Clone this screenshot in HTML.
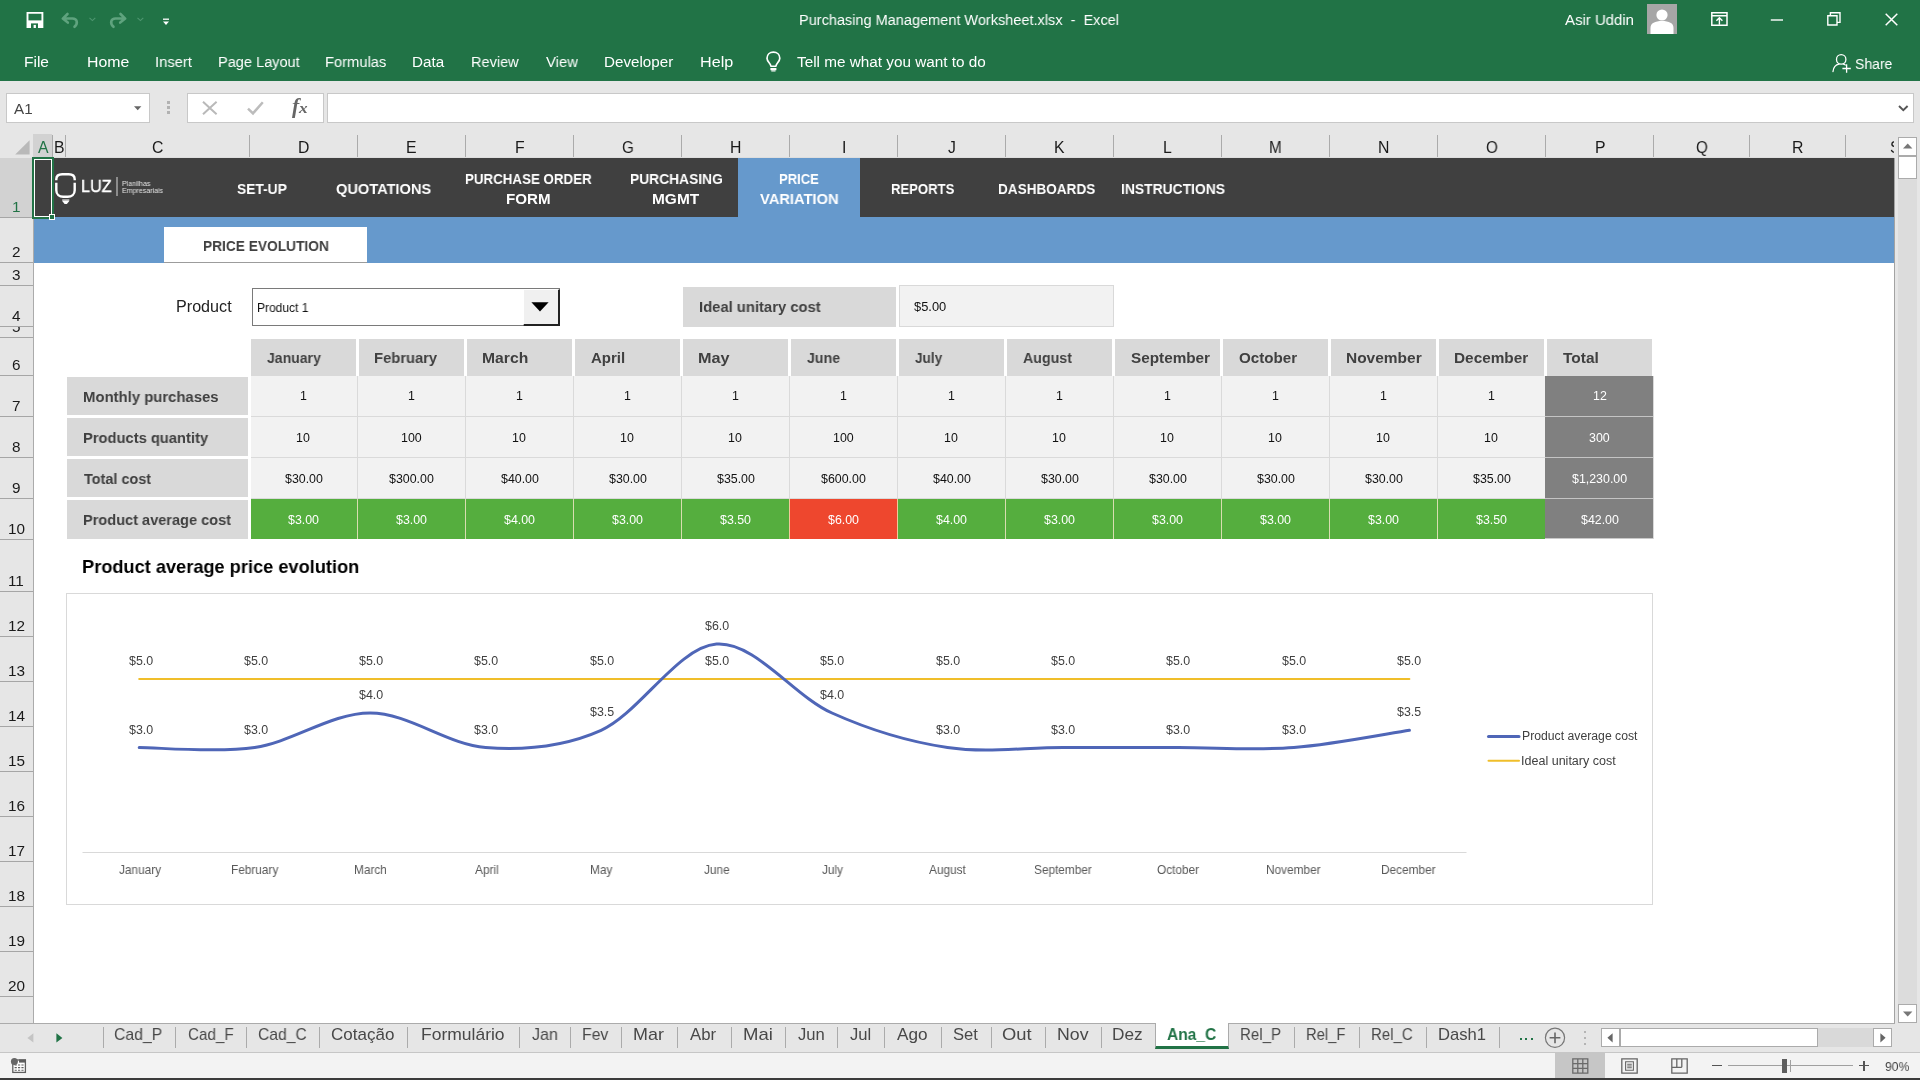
<!DOCTYPE html>
<html lang="en"><head><meta charset="utf-8"><title>Purchasing Management Worksheet.xlsx - Excel</title>
<style>
html,body{margin:0;padding:0;}
body{width:1920px;height:1080px;position:relative;overflow:hidden;background:#fff;font-family:"Liberation Sans",sans-serif;}
.b{position:absolute;box-sizing:border-box;}
.t{position:absolute;white-space:pre;line-height:1;transform-origin:0 0;will-change:transform;}
svg{position:absolute;overflow:visible;}
</style></head>
<body>
<!-- title bar -->
<div class="b" style="left:0px;top:0px;width:1920px;height:81px;background:#217346;"></div>
<span class="t" style="left:799.31px;top:12.13px;font-size:15.2px;color:#fff;transform:scaleX(0.9556);">Purchasing Management Worksheet.xlsx  -  Excel</span>
<span class="t" style="left:1565.47px;top:12.13px;font-size:15.2px;color:#fff;transform:scaleX(0.9849);">Asir Uddin</span>
<span class="t" style="left:23.73px;top:53.83px;font-size:15.2px;color:#fff;transform:scaleX(1.0194);">File</span>
<span class="t" style="left:87.20px;top:53.83px;font-size:15.2px;color:#fff;transform:scaleX(1.0429);">Home</span>
<span class="t" style="left:154.89px;top:53.83px;font-size:15.2px;color:#fff;transform:scaleX(0.9720);">Insert</span>
<span class="t" style="left:217.81px;top:53.83px;font-size:15.2px;color:#fff;transform:scaleX(0.9578);">Page Layout</span>
<span class="t" style="left:325.29px;top:53.83px;font-size:15.2px;color:#fff;transform:scaleX(0.9675);">Formulas</span>
<span class="t" style="left:412.25px;top:53.83px;font-size:15.2px;color:#fff;">Data</span>
<span class="t" style="left:471.11px;top:53.83px;font-size:15.2px;color:#fff;transform:scaleX(0.9557);">Review</span>
<span class="t" style="left:545.73px;top:53.83px;font-size:15.2px;color:#fff;transform:scaleX(0.9777);">View</span>
<span class="t" style="left:604.35px;top:53.83px;font-size:15.2px;color:#fff;">Developer</span>
<span class="t" style="left:700.18px;top:53.83px;font-size:15.2px;color:#fff;transform:scaleX(1.0625);">Help</span>
<span class="t" style="left:797.16px;top:53.83px;font-size:15.2px;color:#fff;transform:scaleX(1.0078);">Tell me what you want to do</span>
<span class="t" style="left:1854.76px;top:55.83px;font-size:15.2px;color:#fff;transform:scaleX(0.9217);">Share</span>
<svg style="left:26px;top:11px" width="18" height="18" viewBox="26 11 18 18"><path d="M27.5 12.9h14.9v14.2H27.5z" fill="none" stroke="#fff" stroke-width="1.9"/><rect x="28" y="20.4" width="14" height="7" fill="#fff"/><rect x="31" y="23.4" width="7" height="4.6" fill="#217346"/><rect x="33.6" y="24.9" width="2.3" height="3.1" fill="#fff"/></svg>
<svg style="left:61px;top:13px" width="19" height="15" viewBox="0 0 19 15"><path d="M6.5 1 L1.8 5.6 L6.8 9.6 M2.2 5.5 H11.5 C16 5.5 17.5 10 13.5 13.8" fill="none" stroke="#5fa37e" stroke-width="2.6" stroke-linecap="round" stroke-linejoin="round"/></svg>
<svg style="left:89px;top:17px" width="7" height="5" viewBox="0 0 7 5"><path d="M0.5 0.8 L3.4 3.6 L6.3 0.8" fill="none" stroke="#4e9670" stroke-width="1.1"/></svg>
<svg style="left:108px;top:13px" width="19" height="15" viewBox="0 0 19 15"><path d="M12.5 1 L17.2 5.6 L12.2 9.6 M16.8 5.5 H7.5 C3 5.5 1.5 10 5.5 13.8" fill="none" stroke="#5fa37e" stroke-width="2.6" stroke-linecap="round" stroke-linejoin="round"/></svg>
<svg style="left:137px;top:17px" width="7" height="5" viewBox="0 0 7 5"><path d="M0.5 0.8 L3.4 3.6 L6.3 0.8" fill="none" stroke="#4e9670" stroke-width="1.1"/></svg>
<svg style="left:162px;top:18px" width="8" height="8" viewBox="0 0 8 8"><path d="M1 1.2h6" stroke="#fff" stroke-width="1.3"/><path d="M1 3.6h6L4 6.9z" fill="#fff"/></svg>
<svg style="left:765px;top:51px" width="17" height="22" viewBox="0 0 17 22"><path d="M5.7 14.6 C5.7 12.2 2 10.8 2 7.2 C2 3.6 4.8 1.2 8.4 1.2 C12 1.2 14.8 3.6 14.8 7.2 C14.8 10.8 11.1 12.2 11.1 14.6" fill="none" stroke="#fff" stroke-width="1.7" stroke-linecap="round"/><path d="M5.4 14.6h6v1.3h-6z M5.4 17h6v2.2h-6z M6.3 19.4h4.2v1.2h-4.2z" fill="#fff"/></svg>
<svg style="left:1647px;top:4px" width="30" height="30" viewBox="0 0 30 30"><rect width="30" height="30" fill="#a6a6a6"/><circle cx="15" cy="11" r="5.6" fill="#fff"/><path d="M3.5 30 V24 C3.5 19 8 17 15 17 C22 17 26.5 19 26.5 24 V30z" fill="#fff"/></svg>
<svg style="left:1711px;top:12px" width="18" height="14" viewBox="0 0 18 14"><path d="M0.8 0.8h15.2v12.4H0.8z M0.8 3.7h15.2" fill="none" stroke="#fff" stroke-width="1.5"/><path d="M8.4 12.8V5.8 M5.4 8.8L8.4 5.8l3 3" fill="none" stroke="#fff" stroke-width="1.4"/></svg>
<svg style="left:1770px;top:15px" width="14" height="10" viewBox="0 0 14 10"><path d="M0.8 5h12.2" stroke="#fff" stroke-width="1.4"/></svg>
<svg style="left:1827px;top:12px" width="14" height="14" viewBox="0 0 14 14"><path d="M0.8 3.8h9.2v9.2H0.8z M3.4 3.6V0.8h9.6v9.6h-2.8" fill="none" stroke="#fff" stroke-width="1.4"/></svg>
<svg style="left:1885px;top:13px" width="13" height="13" viewBox="0 0 13 13"><path d="M0.7 0.7L12.3 12.3M12.3 0.7L0.7 12.3" stroke="#fff" stroke-width="1.5"/></svg>
<svg style="left:1832px;top:53px" width="20" height="21" viewBox="0 0 20 21"><circle cx="9.2" cy="6.4" r="4.7" fill="none" stroke="#fff" stroke-width="1.3"/><path d="M1 18.5 C1.6 13.8 4.5 11.6 7 11.2 M11.5 11.2 C12.2 11.4 12.8 11.7 13.3 12" fill="none" stroke="#fff" stroke-width="1.3" stroke-linecap="round"/><path d="M14.6 11.3v8.4 M10.4 15.5h8.4" stroke="#fff" stroke-width="1.3"/></svg>
<!-- formula bar -->
<div class="b" style="left:0px;top:81px;width:1920px;height:53px;background:#e6e6e6;"></div>
<div class="b" style="left:6px;top:93px;width:144px;height:30px;background:#fff;border:1px solid #c8c8c8;"></div>
<span class="t" style="left:13.57px;top:101.13px;font-size:15.2px;color:#444;transform:scaleX(0.9884);">A1</span>
<svg style="left:134px;top:106px" width="8" height="5" viewBox="0 0 8 5"><path d="M0 0.3h7.4L3.7 4.2z" fill="#666"/></svg>
<div class="b" style="left:167.4px;top:101px;width:2.5999999999999943px;height:2.5px;background:#b2b2b2;"></div>
<div class="b" style="left:167.4px;top:106.3px;width:2.5999999999999943px;height:2.5px;background:#b2b2b2;"></div>
<div class="b" style="left:167.4px;top:111.3px;width:2.5999999999999943px;height:2.5px;background:#b2b2b2;"></div>
<div class="b" style="left:187px;top:93px;width:137px;height:30px;background:#fff;border:1px solid #c8c8c8;"></div>
<svg style="left:202px;top:101px" width="16" height="14" viewBox="0 0 16 14"><path d="M1 0.8L14.6 13.2M14.6 0.8L1 13.2" stroke="#b9b9b9" stroke-width="2"/></svg>
<svg style="left:247px;top:101px" width="17" height="14" viewBox="0 0 17 14"><path d="M1 7.6L6 12.4L15.8 1.2" fill="none" stroke="#bcbcbc" stroke-width="2.5"/></svg>
<span class="t" style="left:291.50px;top:96.45px;font-size:20px;color:#666;font-weight:700;font-style:italic;font-family:'Liberation Serif', serif;transform:scaleX(1.0802);">f</span>
<span class="t" style="left:298.81px;top:100.64px;font-size:15px;color:#666;font-weight:700;font-style:italic;font-family:'Liberation Serif', serif;transform:scaleX(1.1480);">x</span>
<div class="b" style="left:327px;top:93px;width:1587px;height:30px;background:#fff;border:1px solid #c8c8c8;"></div>
<svg style="left:1898px;top:105px" width="11" height="7" viewBox="0 0 11 7"><path d="M1 1L5.3 5.2L9.6 1" fill="none" stroke="#555" stroke-width="1.9"/></svg>
<!-- grid headers -->
<div class="b" style="left:0px;top:134px;width:1920px;height:24px;background:#e6e6e6;"></div>
<div class="b" style="left:0px;top:158px;width:33px;height:865px;background:#e6e6e6;"></div>
<div class="b" style="left:33px;top:134px;width:19px;height:24px;background:#d2d2d2;"></div>
<div class="b" style="left:0px;top:158px;width:33px;height:59px;background:#d2d2d2;"></div>
<svg style="left:15px;top:140px" width="15" height="15" viewBox="0 0 15 15"><path d="M14.6 0.2V14.6H0.2z" fill="#b9b9b9"/></svg>
<div class="b" style="left:52px;top:135px;width:1px;height:23px;background:#ababab;"></div>
<div class="b" style="left:65px;top:135px;width:1px;height:23px;background:#ababab;"></div>
<div class="b" style="left:249px;top:135px;width:1px;height:23px;background:#ababab;"></div>
<div class="b" style="left:357px;top:135px;width:1px;height:23px;background:#ababab;"></div>
<div class="b" style="left:465px;top:135px;width:1px;height:23px;background:#ababab;"></div>
<div class="b" style="left:573px;top:135px;width:1px;height:23px;background:#ababab;"></div>
<div class="b" style="left:681px;top:135px;width:1px;height:23px;background:#ababab;"></div>
<div class="b" style="left:789px;top:135px;width:1px;height:23px;background:#ababab;"></div>
<div class="b" style="left:897px;top:135px;width:1px;height:23px;background:#ababab;"></div>
<div class="b" style="left:1005px;top:135px;width:1px;height:23px;background:#ababab;"></div>
<div class="b" style="left:1113px;top:135px;width:1px;height:23px;background:#ababab;"></div>
<div class="b" style="left:1221px;top:135px;width:1px;height:23px;background:#ababab;"></div>
<div class="b" style="left:1329px;top:135px;width:1px;height:23px;background:#ababab;"></div>
<div class="b" style="left:1437px;top:135px;width:1px;height:23px;background:#ababab;"></div>
<div class="b" style="left:1545px;top:135px;width:1px;height:23px;background:#ababab;"></div>
<div class="b" style="left:1653px;top:135px;width:1px;height:23px;background:#ababab;"></div>
<div class="b" style="left:1749px;top:135px;width:1px;height:23px;background:#ababab;"></div>
<div class="b" style="left:1845px;top:135px;width:1px;height:23px;background:#ababab;"></div>
<div class="b" style="left:33px;top:157px;width:1862px;height:1px;background:#dedede;"></div>
<div class="b" style="left:33px;top:158px;width:1px;height:865px;background:#ababab;"></div>
<span class="t" style="left:38.24px;top:139.63px;font-size:15.8px;color:#217346;transform:scaleX(0.9600);">A</span>
<span class="t" style="left:54.02px;top:139.63px;font-size:15.8px;color:#1a1a1a;transform:scaleX(0.9600);">B</span>
<span class="t" style="left:152.22px;top:139.63px;font-size:15.8px;color:#1a1a1a;transform:scaleX(0.9600);">C</span>
<span class="t" style="left:298.06px;top:139.63px;font-size:15.8px;color:#1a1a1a;transform:scaleX(0.9600);">D</span>
<span class="t" style="left:406.44px;top:139.63px;font-size:15.8px;color:#1a1a1a;transform:scaleX(0.9600);">E</span>
<span class="t" style="left:514.85px;top:139.63px;font-size:15.8px;color:#1a1a1a;transform:scaleX(0.9600);">F</span>
<span class="t" style="left:622.08px;top:139.63px;font-size:15.8px;color:#1a1a1a;transform:scaleX(0.9600);">G</span>
<span class="t" style="left:730.31px;top:139.63px;font-size:15.8px;color:#1a1a1a;transform:scaleX(0.9600);">H</span>
<span class="t" style="left:841.69px;top:139.63px;font-size:15.8px;color:#1a1a1a;transform:scaleX(0.9600);">I</span>
<span class="t" style="left:948.45px;top:139.63px;font-size:15.8px;color:#1a1a1a;transform:scaleX(0.9600);">J</span>
<span class="t" style="left:1054.20px;top:139.63px;font-size:15.8px;color:#1a1a1a;transform:scaleX(0.9600);">K</span>
<span class="t" style="left:1163.21px;top:139.63px;font-size:15.8px;color:#1a1a1a;transform:scaleX(0.9600);">L</span>
<span class="t" style="left:1269.48px;top:139.63px;font-size:15.8px;color:#1a1a1a;transform:scaleX(0.9600);">M</span>
<span class="t" style="left:1378.31px;top:139.63px;font-size:15.8px;color:#1a1a1a;transform:scaleX(0.9600);">N</span>
<span class="t" style="left:1485.90px;top:139.63px;font-size:15.8px;color:#1a1a1a;transform:scaleX(0.9600);">O</span>
<span class="t" style="left:1594.52px;top:139.63px;font-size:15.8px;color:#1a1a1a;transform:scaleX(0.9600);">P</span>
<span class="t" style="left:1695.90px;top:139.63px;font-size:15.8px;color:#1a1a1a;transform:scaleX(0.9600);">Q</span>
<span class="t" style="left:1792.05px;top:139.63px;font-size:15.8px;color:#1a1a1a;transform:scaleX(0.9600);">R</span>
<span class="t" style="left:1889.64px;top:139.63px;font-size:15.8px;color:#1a1a1a;transform:scaleX(0.9200);clip-path:inset(0 5.6px 0 0);">S</span>
<div class="b" style="left:0px;top:217px;width:33px;height:1px;background:#a6a6a6;"></div>
<span class="t" style="left:11.93px;top:199.15px;font-size:15.3px;color:#217346;">1</span>
<div class="b" style="left:0px;top:262px;width:33px;height:1px;background:#a6a6a6;"></div>
<span class="t" style="left:12.14px;top:244.15px;font-size:15.3px;color:#1a1a1a;">2</span>
<div class="b" style="left:0px;top:285px;width:33px;height:1px;background:#a6a6a6;"></div>
<span class="t" style="left:12.19px;top:267.15px;font-size:15.3px;color:#1a1a1a;">3</span>
<div class="b" style="left:0px;top:326px;width:33px;height:1px;background:#a6a6a6;"></div>
<span class="t" style="left:12.19px;top:308.15px;font-size:15.3px;color:#1a1a1a;">4</span>
<div class="b" style="left:0px;top:337px;width:33px;height:1px;background:#a6a6a6;"></div>
<span class="t" style="left:12.16px;top:319.15px;font-size:15.3px;color:#1a1a1a;clip-path:inset(8.6px 0 0 0);">5</span>
<div class="b" style="left:0px;top:375px;width:33px;height:1px;background:#a6a6a6;"></div>
<span class="t" style="left:12.09px;top:357.15px;font-size:15.3px;color:#1a1a1a;">6</span>
<div class="b" style="left:0px;top:416px;width:33px;height:1px;background:#a6a6a6;"></div>
<span class="t" style="left:12.13px;top:398.15px;font-size:15.3px;color:#1a1a1a;">7</span>
<div class="b" style="left:0px;top:457px;width:33px;height:1px;background:#a6a6a6;"></div>
<span class="t" style="left:12.14px;top:439.15px;font-size:15.3px;color:#1a1a1a;">8</span>
<div class="b" style="left:0px;top:498px;width:33px;height:1px;background:#a6a6a6;"></div>
<span class="t" style="left:12.15px;top:480.15px;font-size:15.3px;color:#1a1a1a;">9</span>
<div class="b" style="left:0px;top:539px;width:33px;height:1px;background:#a6a6a6;"></div>
<span class="t" style="left:7.61px;top:521.15px;font-size:15.3px;color:#1a1a1a;">10</span>
<div class="b" style="left:0px;top:591px;width:33px;height:1px;background:#a6a6a6;"></div>
<span class="t" style="left:8.25px;top:573.15px;font-size:15.3px;color:#1a1a1a;">11</span>
<div class="b" style="left:0px;top:636px;width:33px;height:1px;background:#a6a6a6;"></div>
<span class="t" style="left:7.69px;top:618.15px;font-size:15.3px;color:#1a1a1a;">12</span>
<div class="b" style="left:0px;top:681px;width:33px;height:1px;background:#a6a6a6;"></div>
<span class="t" style="left:7.65px;top:663.15px;font-size:15.3px;color:#1a1a1a;">13</span>
<div class="b" style="left:0px;top:726px;width:33px;height:1px;background:#a6a6a6;"></div>
<span class="t" style="left:7.53px;top:708.15px;font-size:15.3px;color:#1a1a1a;">14</span>
<div class="b" style="left:0px;top:771px;width:33px;height:1px;background:#a6a6a6;"></div>
<span class="t" style="left:7.63px;top:753.15px;font-size:15.3px;color:#1a1a1a;">15</span>
<div class="b" style="left:0px;top:816px;width:33px;height:1px;background:#a6a6a6;"></div>
<span class="t" style="left:7.65px;top:798.15px;font-size:15.3px;color:#1a1a1a;">16</span>
<div class="b" style="left:0px;top:861px;width:33px;height:1px;background:#a6a6a6;"></div>
<span class="t" style="left:7.69px;top:843.15px;font-size:15.3px;color:#1a1a1a;">17</span>
<div class="b" style="left:0px;top:906px;width:33px;height:1px;background:#a6a6a6;"></div>
<span class="t" style="left:7.64px;top:888.15px;font-size:15.3px;color:#1a1a1a;">18</span>
<div class="b" style="left:0px;top:951px;width:33px;height:1px;background:#a6a6a6;"></div>
<span class="t" style="left:7.67px;top:933.15px;font-size:15.3px;color:#1a1a1a;">19</span>
<div class="b" style="left:0px;top:996px;width:33px;height:1px;background:#a6a6a6;"></div>
<span class="t" style="left:7.81px;top:978.15px;font-size:15.3px;color:#1a1a1a;">20</span>
<!-- sheet: navigation row -->
<div class="b" style="left:34px;top:158px;width:1860px;height:59px;background:#404040;"></div>
<div class="b" style="left:34px;top:217px;width:1860px;height:46px;background:#6699cc;"></div>
<div class="b" style="left:738px;top:158px;width:122px;height:62px;background:#6699cc;"></div>
<div class="b" style="left:164px;top:227px;width:203px;height:36px;background:#fff;border-bottom:1px solid #9c9c9c;"></div>
<span class="t" style="left:236.60px;top:180.90px;font-size:15.0px;color:#fff;font-weight:700;transform:scaleX(0.9203);">SET-UP</span>
<span class="t" style="left:336.40px;top:180.90px;font-size:15.0px;color:#fff;font-weight:700;transform:scaleX(0.9733);">QUOTATIONS</span>
<span class="t" style="left:465.11px;top:170.90px;font-size:15.0px;color:#fff;font-weight:700;transform:scaleX(0.8888);">PURCHASE ORDER</span>
<span class="t" style="left:506.49px;top:190.90px;font-size:15.0px;color:#fff;font-weight:700;transform:scaleX(1.0079);">FORM</span>
<span class="t" style="left:630.08px;top:170.90px;font-size:15.0px;color:#fff;font-weight:700;transform:scaleX(0.9200);">PURCHASING</span>
<span class="t" style="left:651.97px;top:190.90px;font-size:15.0px;color:#fff;font-weight:700;transform:scaleX(1.0299);">MGMT</span>
<span class="t" style="left:779.13px;top:170.90px;font-size:15.0px;color:#fff;font-weight:700;transform:scaleX(0.8700);">PRICE</span>
<span class="t" style="left:760.40px;top:190.90px;font-size:15.0px;color:#fff;font-weight:700;transform:scaleX(0.9789);">VARIATION</span>
<span class="t" style="left:890.82px;top:180.90px;font-size:15.0px;color:#fff;font-weight:700;transform:scaleX(0.8741);">REPORTS</span>
<span class="t" style="left:998.09px;top:180.90px;font-size:15.0px;color:#fff;font-weight:700;transform:scaleX(0.9044);">DASHBOARDS</span>
<span class="t" style="left:1121.07px;top:180.90px;font-size:15.0px;color:#fff;font-weight:700;transform:scaleX(0.9242);">INSTRUCTIONS</span>
<span class="t" style="left:202.58px;top:238.30px;font-size:15.0px;color:#404040;font-weight:700;transform:scaleX(0.9151);">PRICE EVOLUTION</span>
<svg style="left:50px;top:168px" width="30" height="40" viewBox="50 168 30 40"><path d="M56.3 180.2V179.2C56.3 175.6 58.6 174.2 62.2 174.2H68.8C72.4 174.2 74.7 175.6 74.7 179.2V180.2 M56.3 182.7V190.3C56.3 194.4 59.4 196.8 63.2 196.8H67.8C71.6 196.8 74.7 194.4 74.7 190.3V182.7" fill="none" stroke="#fff" stroke-width="2.4"/><path d="M62.2 199.2h7.1v1.7h-7.1z" fill="#c4c4c4"/><path d="M62.2 200.9h7.1l-2.4 3h-2.3z" fill="#fff"/></svg>
<span class="t" style="left:80.77px;top:177.87px;font-size:17.4px;color:#fff;transform:scaleX(0.9292);-webkit-text-stroke:0.45px #fff;">LUZ</span>
<div class="b" style="left:116px;top:177.4px;width:2px;height:18.400000000000006px;background:#8c8c8c;"></div>
<span class="t" style="left:122.23px;top:179.62px;font-size:7.3px;color:#e2e2e2;transform:scaleX(0.9561);">Planilhas</span>
<span class="t" style="left:122.22px;top:187.42px;font-size:7.3px;color:#e2e2e2;transform:scaleX(0.9637);">Empresariais</span>
<div class="b" style="left:32px;top:157px;width:22px;height:62px;border:2px solid #217346;box-shadow:inset 0 0 0 1px #fff;"></div>
<div class="b" style="left:49px;top:214px;width:6px;height:6px;background:#217346;border:1px solid #fff;"></div>
<!-- sheet: filters -->
<span class="t" style="left:176.18px;top:298.83px;font-size:15.8px;color:#222;transform:scaleX(1.0218);">Product</span>
<div class="b" style="left:252px;top:288px;width:308px;height:38px;background:#fff;border:1px solid #7a7a7a;"></div>
<div class="b" style="left:523px;top:289px;width:37px;height:37px;background:#f0f0f0;border-left:1px solid #fff;border-top:1px solid #fff;border-right:2px solid #222;border-bottom:2px solid #222;"></div>
<svg style="left:531px;top:302px" width="18" height="10" viewBox="0 0 18 10"><path d="M0.4 0.2h17.2L9 9.6z" fill="#000"/></svg>
<span class="t" style="left:256.51px;top:301.50px;font-size:12.4px;color:#111;transform:scaleX(0.9684);">Product 1</span>
<div class="b" style="left:683px;top:287px;width:213px;height:40px;background:#d9d9d9;"></div>
<span class="t" style="left:699.21px;top:299.10px;font-size:15.0px;color:#404040;font-weight:700;transform:scaleX(0.9870);">Ideal unitary cost</span>
<div class="b" style="left:899px;top:285px;width:215px;height:42px;background:#f2f2f2;border:1px solid #d9d9d9;"></div>
<span class="t" style="left:913.86px;top:301.10px;font-size:12.4px;color:#111;transform:scaleX(1.0395);">$5.00</span>
<!-- sheet: table -->
<div class="b" style="left:251px;top:339px;width:105px;height:37px;background:#d9d9d9;"></div>
<span class="t" style="left:266.79px;top:350.40px;font-size:15.0px;color:#404040;font-weight:700;transform:scaleX(0.9364);">January</span>
<div class="b" style="left:359px;top:339px;width:105px;height:37px;background:#d9d9d9;"></div>
<span class="t" style="left:374.41px;top:350.40px;font-size:15.0px;color:#404040;font-weight:700;transform:scaleX(0.9839);">February</span>
<div class="b" style="left:467px;top:339px;width:105px;height:37px;background:#d9d9d9;"></div>
<span class="t" style="left:482.25px;top:350.40px;font-size:15.0px;color:#404040;font-weight:700;transform:scaleX(1.0461);">March</span>
<div class="b" style="left:575px;top:339px;width:105px;height:37px;background:#d9d9d9;"></div>
<span class="t" style="left:590.63px;top:350.40px;font-size:15.0px;color:#404040;font-weight:700;transform:scaleX(0.9867);">April</span>
<div class="b" style="left:683px;top:339px;width:105px;height:37px;background:#d9d9d9;"></div>
<span class="t" style="left:698.31px;top:350.40px;font-size:15.0px;color:#404040;font-weight:700;transform:scaleX(1.0817);">May</span>
<div class="b" style="left:791px;top:339px;width:105px;height:37px;background:#d9d9d9;"></div>
<span class="t" style="left:806.79px;top:350.40px;font-size:15.0px;color:#404040;font-weight:700;transform:scaleX(0.9453);">June</span>
<div class="b" style="left:899px;top:339px;width:105px;height:37px;background:#d9d9d9;"></div>
<span class="t" style="left:914.79px;top:350.40px;font-size:15.0px;color:#404040;font-weight:700;transform:scaleX(0.9055);">July</span>
<div class="b" style="left:1007px;top:339px;width:105px;height:37px;background:#d9d9d9;"></div>
<span class="t" style="left:1022.95px;top:350.40px;font-size:15.0px;color:#404040;font-weight:700;transform:scaleX(0.9469);">August</span>
<div class="b" style="left:1115px;top:339px;width:105px;height:37px;background:#d9d9d9;"></div>
<span class="t" style="left:1130.76px;top:350.40px;font-size:15.0px;color:#404040;font-weight:700;transform:scaleX(1.0199);">September</span>
<div class="b" style="left:1223px;top:339px;width:105px;height:37px;background:#d9d9d9;"></div>
<span class="t" style="left:1238.98px;top:350.40px;font-size:15.0px;color:#404040;font-weight:700;transform:scaleX(1.0111);">October</span>
<div class="b" style="left:1331px;top:339px;width:105px;height:37px;background:#d9d9d9;"></div>
<span class="t" style="left:1346.46px;top:350.40px;font-size:15.0px;color:#404040;font-weight:700;transform:scaleX(1.0315);">November</span>
<div class="b" style="left:1439px;top:339px;width:105px;height:37px;background:#d9d9d9;"></div>
<span class="t" style="left:1454.47px;top:350.40px;font-size:15.0px;color:#404040;font-weight:700;transform:scaleX(1.0236);">December</span>
<div class="b" style="left:1547px;top:339px;width:105px;height:37px;background:#d9d9d9;"></div>
<span class="t" style="left:1562.83px;top:350.40px;font-size:15.0px;color:#404040;font-weight:700;transform:scaleX(1.0302);">Total</span>
<div class="b" style="left:251px;top:376px;width:1294px;height:123px;background:#f2f2f2;"></div>
<div class="b" style="left:357px;top:376px;width:1px;height:123px;background:#dadada;"></div>
<div class="b" style="left:465px;top:376px;width:1px;height:123px;background:#dadada;"></div>
<div class="b" style="left:573px;top:376px;width:1px;height:123px;background:#dadada;"></div>
<div class="b" style="left:681px;top:376px;width:1px;height:123px;background:#dadada;"></div>
<div class="b" style="left:789px;top:376px;width:1px;height:123px;background:#dadada;"></div>
<div class="b" style="left:897px;top:376px;width:1px;height:123px;background:#dadada;"></div>
<div class="b" style="left:1005px;top:376px;width:1px;height:123px;background:#dadada;"></div>
<div class="b" style="left:1113px;top:376px;width:1px;height:123px;background:#dadada;"></div>
<div class="b" style="left:1221px;top:376px;width:1px;height:123px;background:#dadada;"></div>
<div class="b" style="left:1329px;top:376px;width:1px;height:123px;background:#dadada;"></div>
<div class="b" style="left:1437px;top:376px;width:1px;height:123px;background:#dadada;"></div>
<div class="b" style="left:251px;top:416px;width:1294px;height:1px;background:#dadada;"></div>
<div class="b" style="left:251px;top:457px;width:1294px;height:1px;background:#dadada;"></div>
<div class="b" style="left:251px;top:498px;width:1294px;height:1px;background:#dadada;"></div>
<div class="b" style="left:1545px;top:376px;width:108px;height:163px;background:#808080;"></div>
<div class="b" style="left:1545px;top:416px;width:108px;height:1px;background:#c4c4c4;"></div>
<div class="b" style="left:1545px;top:457px;width:108px;height:1px;background:#c4c4c4;"></div>
<div class="b" style="left:1545px;top:498px;width:108px;height:1px;background:#c4c4c4;"></div>
<div class="b" style="left:1545px;top:538px;width:108px;height:1px;background:#c9c9c9;"></div>
<div class="b" style="left:1653px;top:376px;width:1px;height:163px;background:#d9d9d9;"></div>
<div class="b" style="left:251px;top:499px;width:106px;height:40px;background:#55ae3e;"></div>
<div class="b" style="left:358px;top:499px;width:107px;height:40px;background:#55ae3e;"></div>
<div class="b" style="left:357px;top:499px;width:1px;height:40px;background:#d8ddb0;"></div>
<div class="b" style="left:466px;top:499px;width:107px;height:40px;background:#55ae3e;"></div>
<div class="b" style="left:465px;top:499px;width:1px;height:40px;background:#d8ddb0;"></div>
<div class="b" style="left:574px;top:499px;width:107px;height:40px;background:#55ae3e;"></div>
<div class="b" style="left:573px;top:499px;width:1px;height:40px;background:#d8ddb0;"></div>
<div class="b" style="left:682px;top:499px;width:107px;height:40px;background:#55ae3e;"></div>
<div class="b" style="left:681px;top:499px;width:1px;height:40px;background:#d8ddb0;"></div>
<div class="b" style="left:790px;top:499px;width:107px;height:40px;background:#ee472e;"></div>
<div class="b" style="left:789px;top:499px;width:1px;height:40px;background:#f2c89a;"></div>
<div class="b" style="left:898px;top:499px;width:107px;height:40px;background:#55ae3e;"></div>
<div class="b" style="left:897px;top:499px;width:1px;height:40px;background:#f2c89a;"></div>
<div class="b" style="left:1006px;top:499px;width:107px;height:40px;background:#55ae3e;"></div>
<div class="b" style="left:1005px;top:499px;width:1px;height:40px;background:#d8ddb0;"></div>
<div class="b" style="left:1114px;top:499px;width:107px;height:40px;background:#55ae3e;"></div>
<div class="b" style="left:1113px;top:499px;width:1px;height:40px;background:#d8ddb0;"></div>
<div class="b" style="left:1222px;top:499px;width:107px;height:40px;background:#55ae3e;"></div>
<div class="b" style="left:1221px;top:499px;width:1px;height:40px;background:#d8ddb0;"></div>
<div class="b" style="left:1330px;top:499px;width:107px;height:40px;background:#55ae3e;"></div>
<div class="b" style="left:1329px;top:499px;width:1px;height:40px;background:#d8ddb0;"></div>
<div class="b" style="left:1438px;top:499px;width:107px;height:40px;background:#55ae3e;"></div>
<div class="b" style="left:1437px;top:499px;width:1px;height:40px;background:#d8ddb0;"></div>
<div class="b" style="left:67px;top:377px;width:181px;height:38px;background:#d9d9d9;"></div>
<span class="t" style="left:82.70px;top:388.70px;font-size:15.0px;color:#404040;font-weight:700;transform:scaleX(0.9920);">Monthly purchases</span>
<span class="t" style="left:299.98px;top:390.30px;font-size:12.4px;color:#111;">1</span>
<span class="t" style="left:407.98px;top:390.30px;font-size:12.4px;color:#111;">1</span>
<span class="t" style="left:515.98px;top:390.30px;font-size:12.4px;color:#111;">1</span>
<span class="t" style="left:623.98px;top:390.30px;font-size:12.4px;color:#111;">1</span>
<span class="t" style="left:731.98px;top:390.30px;font-size:12.4px;color:#111;">1</span>
<span class="t" style="left:839.98px;top:390.30px;font-size:12.4px;color:#111;">1</span>
<span class="t" style="left:947.98px;top:390.30px;font-size:12.4px;color:#111;">1</span>
<span class="t" style="left:1055.98px;top:390.30px;font-size:12.4px;color:#111;">1</span>
<span class="t" style="left:1163.98px;top:390.30px;font-size:12.4px;color:#111;">1</span>
<span class="t" style="left:1271.98px;top:390.30px;font-size:12.4px;color:#111;">1</span>
<span class="t" style="left:1379.98px;top:390.30px;font-size:12.4px;color:#111;">1</span>
<span class="t" style="left:1487.98px;top:390.30px;font-size:12.4px;color:#111;">1</span>
<span class="t" style="left:1592.54px;top:390.30px;font-size:12.4px;color:#fff;">12</span>
<div class="b" style="left:67px;top:418px;width:181px;height:38px;background:#d9d9d9;"></div>
<span class="t" style="left:82.72px;top:430.10px;font-size:15.0px;color:#404040;font-weight:700;transform:scaleX(0.9808);">Products quantity</span>
<span class="t" style="left:296.47px;top:431.70px;font-size:12.4px;color:#111;">10</span>
<span class="t" style="left:401.03px;top:431.70px;font-size:12.4px;color:#111;">100</span>
<span class="t" style="left:512.47px;top:431.70px;font-size:12.4px;color:#111;">10</span>
<span class="t" style="left:620.47px;top:431.70px;font-size:12.4px;color:#111;">10</span>
<span class="t" style="left:728.47px;top:431.70px;font-size:12.4px;color:#111;">10</span>
<span class="t" style="left:833.03px;top:431.70px;font-size:12.4px;color:#111;">100</span>
<span class="t" style="left:944.47px;top:431.70px;font-size:12.4px;color:#111;">10</span>
<span class="t" style="left:1052.47px;top:431.70px;font-size:12.4px;color:#111;">10</span>
<span class="t" style="left:1160.47px;top:431.70px;font-size:12.4px;color:#111;">10</span>
<span class="t" style="left:1268.47px;top:431.70px;font-size:12.4px;color:#111;">10</span>
<span class="t" style="left:1376.47px;top:431.70px;font-size:12.4px;color:#111;">10</span>
<span class="t" style="left:1484.47px;top:431.70px;font-size:12.4px;color:#111;">10</span>
<span class="t" style="left:1589.26px;top:431.70px;font-size:12.4px;color:#fff;">300</span>
<div class="b" style="left:67px;top:459px;width:181px;height:38px;background:#d9d9d9;"></div>
<span class="t" style="left:83.54px;top:471.00px;font-size:15.0px;color:#404040;font-weight:700;transform:scaleX(0.9613);">Total cost</span>
<span class="t" style="left:284.82px;top:472.60px;font-size:12.4px;color:#111;">$30.00</span>
<span class="t" style="left:389.38px;top:472.60px;font-size:12.4px;color:#111;">$300.00</span>
<span class="t" style="left:500.82px;top:472.60px;font-size:12.4px;color:#111;">$40.00</span>
<span class="t" style="left:608.82px;top:472.60px;font-size:12.4px;color:#111;">$30.00</span>
<span class="t" style="left:716.82px;top:472.60px;font-size:12.4px;color:#111;">$35.00</span>
<span class="t" style="left:821.38px;top:472.60px;font-size:12.4px;color:#111;">$600.00</span>
<span class="t" style="left:932.82px;top:472.60px;font-size:12.4px;color:#111;">$40.00</span>
<span class="t" style="left:1040.82px;top:472.60px;font-size:12.4px;color:#111;">$30.00</span>
<span class="t" style="left:1148.82px;top:472.60px;font-size:12.4px;color:#111;">$30.00</span>
<span class="t" style="left:1256.82px;top:472.60px;font-size:12.4px;color:#111;">$30.00</span>
<span class="t" style="left:1364.82px;top:472.60px;font-size:12.4px;color:#111;">$30.00</span>
<span class="t" style="left:1472.82px;top:472.60px;font-size:12.4px;color:#111;">$35.00</span>
<span class="t" style="left:1572.21px;top:472.60px;font-size:12.4px;color:#fff;">$1,230.00</span>
<div class="b" style="left:67px;top:500px;width:181px;height:39px;background:#d9d9d9;"></div>
<span class="t" style="left:82.73px;top:512.10px;font-size:15.0px;color:#404040;font-weight:700;transform:scaleX(0.9704);">Product average cost</span>
<span class="t" style="left:288.27px;top:513.70px;font-size:12.4px;color:#fff;">$3.00</span>
<span class="t" style="left:396.27px;top:513.70px;font-size:12.4px;color:#fff;">$3.00</span>
<span class="t" style="left:504.27px;top:513.70px;font-size:12.4px;color:#fff;">$4.00</span>
<span class="t" style="left:612.27px;top:513.70px;font-size:12.4px;color:#fff;">$3.00</span>
<span class="t" style="left:720.27px;top:513.70px;font-size:12.4px;color:#fff;">$3.50</span>
<span class="t" style="left:828.27px;top:513.70px;font-size:12.4px;color:#fff;">$6.00</span>
<span class="t" style="left:936.27px;top:513.70px;font-size:12.4px;color:#fff;">$4.00</span>
<span class="t" style="left:1044.27px;top:513.70px;font-size:12.4px;color:#fff;">$3.00</span>
<span class="t" style="left:1152.27px;top:513.70px;font-size:12.4px;color:#fff;">$3.00</span>
<span class="t" style="left:1260.27px;top:513.70px;font-size:12.4px;color:#fff;">$3.00</span>
<span class="t" style="left:1368.27px;top:513.70px;font-size:12.4px;color:#fff;">$3.00</span>
<span class="t" style="left:1476.27px;top:513.70px;font-size:12.4px;color:#fff;">$3.50</span>
<span class="t" style="left:1580.82px;top:513.70px;font-size:12.4px;color:#fff;">$42.00</span>
<!-- sheet: chart -->
<span class="t" style="left:82.18px;top:557.86px;font-size:18.6px;color:#000;font-weight:700;transform:scaleX(0.9792);">Product average price evolution</span>
<div class="b" style="left:66px;top:593px;width:1587px;height:312px;background:#fff;border:1px solid #d9d9d9;"></div>
<svg style="left:0;top:0" width="1920" height="1080" viewBox="0 0 1920 1080">
<path d="M82.5 852.5H1466.5" stroke="#d9d9d9" stroke-width="1" fill="none"/>
<path d="M139.2 679H1409.4" stroke="#f0be2a" stroke-width="2" fill="none" stroke-linecap="round"/>
<path d="M139.2 747.5 C158.4 747.5 216.2 753.2 254.7 747.5 C293.2 741.8 331.6 713.0 370.1 713.0 C408.6 713.0 447.1 744.6 485.6 747.5 C524.1 750.4 562.6 747.5 601.1 730.3 C639.6 713.0 678.1 647.0 716.5 644.1 C755.0 641.3 793.5 695.8 832.0 713.0 C870.5 730.3 909.0 741.8 947.5 747.5 C986.0 753.2 1024.5 747.5 1063.0 747.5 C1101.5 747.5 1139.9 747.5 1178.4 747.5 C1216.9 747.5 1255.4 750.4 1293.9 747.5 C1332.4 744.6 1390.1 733.1 1409.4 730.3" stroke="#4f66b7" stroke-width="3" fill="none" stroke-linecap="round" stroke-linejoin="round"/>
<path d="M1488.5 736.5H1519" stroke="#4f66b7" stroke-width="3" fill="none" stroke-linecap="round"/>
<path d="M1488.5 760.8H1519" stroke="#f0be2a" stroke-width="2" fill="none" stroke-linecap="round"/>
</svg>
<span class="t" style="left:128.54px;top:654.54px;font-size:12.0px;color:#404040;transform:scaleX(1.0350);">$5.0</span>
<span class="t" style="left:128.54px;top:723.64px;font-size:12.0px;color:#404040;transform:scaleX(1.0350);">$3.0</span>
<span class="t" style="left:243.85px;top:654.54px;font-size:12.0px;color:#404040;transform:scaleX(1.0350);">$5.0</span>
<span class="t" style="left:243.85px;top:723.64px;font-size:12.0px;color:#404040;transform:scaleX(1.0350);">$3.0</span>
<span class="t" style="left:359.17px;top:654.54px;font-size:12.0px;color:#404040;transform:scaleX(1.0350);">$5.0</span>
<span class="t" style="left:359.17px;top:689.19px;font-size:12.0px;color:#404040;transform:scaleX(1.0350);">$4.0</span>
<span class="t" style="left:474.48px;top:654.54px;font-size:12.0px;color:#404040;transform:scaleX(1.0350);">$5.0</span>
<span class="t" style="left:474.48px;top:723.64px;font-size:12.0px;color:#404040;transform:scaleX(1.0350);">$3.0</span>
<span class="t" style="left:589.79px;top:654.54px;font-size:12.0px;color:#404040;transform:scaleX(1.0350);">$5.0</span>
<span class="t" style="left:589.81px;top:706.42px;font-size:12.0px;color:#404040;transform:scaleX(1.0350);">$3.5</span>
<span class="t" style="left:705.11px;top:654.54px;font-size:12.0px;color:#404040;transform:scaleX(1.0350);">$5.0</span>
<span class="t" style="left:705.11px;top:620.29px;font-size:12.0px;color:#404040;transform:scaleX(1.0350);">$6.0</span>
<span class="t" style="left:820.42px;top:654.54px;font-size:12.0px;color:#404040;transform:scaleX(1.0350);">$5.0</span>
<span class="t" style="left:820.42px;top:689.19px;font-size:12.0px;color:#404040;transform:scaleX(1.0350);">$4.0</span>
<span class="t" style="left:935.74px;top:654.54px;font-size:12.0px;color:#404040;transform:scaleX(1.0350);">$5.0</span>
<span class="t" style="left:935.74px;top:723.64px;font-size:12.0px;color:#404040;transform:scaleX(1.0350);">$3.0</span>
<span class="t" style="left:1051.05px;top:654.54px;font-size:12.0px;color:#404040;transform:scaleX(1.0350);">$5.0</span>
<span class="t" style="left:1051.05px;top:723.64px;font-size:12.0px;color:#404040;transform:scaleX(1.0350);">$3.0</span>
<span class="t" style="left:1166.36px;top:654.54px;font-size:12.0px;color:#404040;transform:scaleX(1.0350);">$5.0</span>
<span class="t" style="left:1166.36px;top:723.64px;font-size:12.0px;color:#404040;transform:scaleX(1.0350);">$3.0</span>
<span class="t" style="left:1281.68px;top:654.54px;font-size:12.0px;color:#404040;transform:scaleX(1.0350);">$5.0</span>
<span class="t" style="left:1281.68px;top:723.64px;font-size:12.0px;color:#404040;transform:scaleX(1.0350);">$3.0</span>
<span class="t" style="left:1396.99px;top:654.54px;font-size:12.0px;color:#404040;transform:scaleX(1.0350);">$5.0</span>
<span class="t" style="left:1397.01px;top:706.42px;font-size:12.0px;color:#404040;transform:scaleX(1.0350);">$3.5</span>
<span class="t" style="left:118.89px;top:863.67px;font-size:12.2px;color:#595959;transform:scaleX(0.9700);">January</span>
<span class="t" style="left:231.23px;top:863.67px;font-size:12.2px;color:#595959;transform:scaleX(0.9700);">February</span>
<span class="t" style="left:354.19px;top:863.67px;font-size:12.2px;color:#595959;transform:scaleX(0.9700);">March</span>
<span class="t" style="left:474.63px;top:863.67px;font-size:12.2px;color:#595959;transform:scaleX(0.9700);">April</span>
<span class="t" style="left:589.80px;top:863.67px;font-size:12.2px;color:#595959;transform:scaleX(0.9700);">May</span>
<span class="t" style="left:704.15px;top:863.67px;font-size:12.2px;color:#595959;transform:scaleX(0.9700);">June</span>
<span class="t" style="left:821.56px;top:863.67px;font-size:12.2px;color:#595959;transform:scaleX(0.9700);">July</span>
<span class="t" style="left:929.14px;top:863.67px;font-size:12.2px;color:#595959;transform:scaleX(0.9700);">August</span>
<span class="t" style="left:1033.79px;top:863.67px;font-size:12.2px;color:#595959;transform:scaleX(0.9700);">September</span>
<span class="t" style="left:1157.03px;top:863.67px;font-size:12.2px;color:#595959;transform:scaleX(0.9700);">October</span>
<span class="t" style="left:1265.95px;top:863.67px;font-size:12.2px;color:#595959;transform:scaleX(0.9700);">November</span>
<span class="t" style="left:1381.31px;top:863.67px;font-size:12.2px;color:#595959;transform:scaleX(0.9700);">December</span>
<span class="t" style="left:1521.60px;top:730.44px;font-size:12.0px;color:#404040;transform:scaleX(1.0184);">Product average cost</span>
<span class="t" style="left:1521.44px;top:755.24px;font-size:12.0px;color:#404040;transform:scaleX(1.0444);">Ideal unitary cost</span>
<!-- scrollbars + tabs + status -->
<div class="b" style="left:1894px;top:134px;width:26px;height:889px;background:#e6e6e6;"></div>
<div class="b" style="left:1894px;top:158px;width:1px;height:866px;background:#a3a3a3;"></div>
<div class="b" style="left:1898px;top:156px;width:19px;height:850px;background:#dcdcdc;"></div>
<div class="b" style="left:1898px;top:137px;width:19px;height:19px;background:#fff;border:1px solid #ababab;"></div>
<svg style="left:1903px;top:143px" width="10" height="6" viewBox="0 0 10 6"><path d="M0 5.4L4.7 0.4L9.4 5.4z" fill="#777"/></svg>
<div class="b" style="left:1898px;top:156px;width:19px;height:23px;background:#fff;border:1px solid #ababab;"></div>
<div class="b" style="left:1898px;top:1004px;width:19px;height:19px;background:#fff;border:1px solid #ababab;"></div>
<svg style="left:1903px;top:1011px" width="10" height="6" viewBox="0 0 10 6"><path d="M0 0.4L4.7 5.4L9.4 0.4z" fill="#777"/></svg>
<div class="b" style="left:0px;top:1023px;width:1920px;height:30px;background:#e6e6e6;"></div>
<div class="b" style="left:0px;top:1023px;width:1895px;height:1px;background:#ababab;"></div>
<div class="b" style="left:0px;top:1052px;width:1920px;height:1px;background:#c6c6c6;"></div>
<svg style="left:27px;top:1033px" width="7" height="10" viewBox="0 0 7 10"><path d="M6.4 0.2V9.6L0.4 4.9z" fill="#c4c4c4"/></svg>
<svg style="left:56px;top:1033px" width="7" height="10" viewBox="0 0 7 10"><path d="M0.4 0.2V9.6L6.4 4.9z" fill="#217346"/></svg>
<div class="b" style="left:103px;top:1027px;width:1px;height:21px;background:#ababab;"></div>
<div class="b" style="left:175px;top:1027px;width:1px;height:21px;background:#ababab;"></div>
<div class="b" style="left:246px;top:1027px;width:1px;height:21px;background:#ababab;"></div>
<div class="b" style="left:319px;top:1027px;width:1px;height:21px;background:#ababab;"></div>
<div class="b" style="left:407px;top:1027px;width:1px;height:21px;background:#ababab;"></div>
<div class="b" style="left:519px;top:1027px;width:1px;height:21px;background:#ababab;"></div>
<div class="b" style="left:570px;top:1027px;width:1px;height:21px;background:#ababab;"></div>
<div class="b" style="left:621px;top:1027px;width:1px;height:21px;background:#ababab;"></div>
<div class="b" style="left:677px;top:1027px;width:1px;height:21px;background:#ababab;"></div>
<div class="b" style="left:731px;top:1027px;width:1px;height:21px;background:#ababab;"></div>
<div class="b" style="left:785px;top:1027px;width:1px;height:21px;background:#ababab;"></div>
<div class="b" style="left:837px;top:1027px;width:1px;height:21px;background:#ababab;"></div>
<div class="b" style="left:884px;top:1027px;width:1px;height:21px;background:#ababab;"></div>
<div class="b" style="left:941px;top:1027px;width:1px;height:21px;background:#ababab;"></div>
<div class="b" style="left:991px;top:1027px;width:1px;height:21px;background:#ababab;"></div>
<div class="b" style="left:1045px;top:1027px;width:1px;height:21px;background:#ababab;"></div>
<div class="b" style="left:1101px;top:1027px;width:1px;height:21px;background:#ababab;"></div>
<div class="b" style="left:1294px;top:1027px;width:1px;height:21px;background:#ababab;"></div>
<div class="b" style="left:1359px;top:1027px;width:1px;height:21px;background:#ababab;"></div>
<div class="b" style="left:1426px;top:1027px;width:1px;height:21px;background:#ababab;"></div>
<div class="b" style="left:1499px;top:1027px;width:1px;height:21px;background:#ababab;"></div>
<span class="t" style="left:114.20px;top:1026.95px;font-size:16.6px;color:#484848;transform:scaleX(0.9484);">Cad_P</span>
<span class="t" style="left:187.73px;top:1026.95px;font-size:16.6px;color:#484848;transform:scaleX(0.9150);">Cad_F</span>
<span class="t" style="left:257.51px;top:1026.95px;font-size:16.6px;color:#484848;transform:scaleX(0.9426);">Cad_C</span>
<span class="t" style="left:330.84px;top:1026.95px;font-size:16.6px;color:#484848;transform:scaleX(1.0253);">Cotação</span>
<span class="t" style="left:420.87px;top:1026.95px;font-size:16.6px;color:#484848;transform:scaleX(1.0537);">Formulário</span>
<span class="t" style="left:531.75px;top:1026.95px;font-size:16.6px;color:#484848;transform:scaleX(0.9714);">Jan</span>
<span class="t" style="left:581.70px;top:1026.95px;font-size:16.6px;color:#484848;transform:scaleX(0.9523);">Fev</span>
<span class="t" style="left:633.13px;top:1026.95px;font-size:16.6px;color:#484848;transform:scaleX(1.0801);">Mar</span>
<span class="t" style="left:689.97px;top:1026.95px;font-size:16.6px;color:#484848;transform:scaleX(1.0110);">Abr</span>
<span class="t" style="left:743.08px;top:1026.95px;font-size:16.6px;color:#484848;transform:scaleX(1.1166);">Mai</span>
<span class="t" style="left:797.74px;top:1026.95px;font-size:16.6px;color:#484848;">Jun</span>
<span class="t" style="left:849.74px;top:1026.95px;font-size:16.6px;color:#484848;">Jul</span>
<span class="t" style="left:897.47px;top:1026.95px;font-size:16.6px;color:#484848;transform:scaleX(1.0347);">Ago</span>
<span class="t" style="left:953.26px;top:1026.95px;font-size:16.6px;color:#484848;transform:scaleX(0.9856);">Set</span>
<span class="t" style="left:1002.43px;top:1026.95px;font-size:16.6px;color:#484848;transform:scaleX(1.1067);">Out</span>
<span class="t" style="left:1056.55px;top:1026.95px;font-size:16.6px;color:#484848;transform:scaleX(1.0677);">Nov</span>
<span class="t" style="left:1112.08px;top:1026.95px;font-size:16.6px;color:#484848;transform:scaleX(1.0393);">Dez</span>
<span class="t" style="left:1240.47px;top:1026.95px;font-size:16.6px;color:#484848;transform:scaleX(0.9054);">Rel_P</span>
<span class="t" style="left:1306.49px;top:1026.95px;font-size:16.6px;color:#484848;transform:scaleX(0.8878);">Rel_F</span>
<span class="t" style="left:1371.47px;top:1026.95px;font-size:16.6px;color:#484848;transform:scaleX(0.9019);">Rel_C</span>
<span class="t" style="left:1438.05px;top:1026.95px;font-size:16.6px;color:#484848;transform:scaleX(0.9913);">Dash1</span>
<div class="b" style="left:1155px;top:1023px;width:74px;height:26px;background:#fff;border-left:1px solid #ababab;border-right:1px solid #ababab;border-bottom:3px solid #217346;"></div>
<span class="t" style="left:1167.11px;top:1026.95px;font-size:16.6px;color:#217346;font-weight:700;transform:scaleX(0.9382);">Ana_C</span>
<div class="b" style="left:1519.5px;top:1037.6px;width:2.0px;height:2.2000000000000455px;background:#217346;"></div>
<div class="b" style="left:1525.2px;top:1037.6px;width:2.0px;height:2.2000000000000455px;background:#217346;"></div>
<div class="b" style="left:1530.9px;top:1037.6px;width:2.0px;height:2.2000000000000455px;background:#217346;"></div>
<svg style="left:1544px;top:1027px" width="22" height="22" viewBox="0 0 22 22"><circle cx="11" cy="10.8" r="9.6" fill="none" stroke="#767676" stroke-width="1.2"/><path d="M11 5.4v10.8M5.6 10.8h10.8" stroke="#666" stroke-width="1.6"/></svg>
<div class="b" style="left:1583.5px;top:1030.5px;width:2.0px;height:2.0px;background:#b4b4b4;"></div>
<div class="b" style="left:1583.5px;top:1036.5px;width:2.0px;height:2.0px;background:#b4b4b4;"></div>
<div class="b" style="left:1583.5px;top:1042.5px;width:2.0px;height:2.0px;background:#b4b4b4;"></div>
<div class="b" style="left:1601px;top:1028px;width:291px;height:19px;background:#d9d9d9;"></div>
<div class="b" style="left:1601px;top:1028px;width:19px;height:19px;background:#fff;border:1px solid #ababab;"></div>
<svg style="left:1607px;top:1033px" width="6" height="10" viewBox="0 0 6 10"><path d="M5.6 0.2V9.4L0.4 4.8z" fill="#666"/></svg>
<div class="b" style="left:1620px;top:1028px;width:198px;height:19px;background:#fff;border:1px solid #ababab;"></div>
<div class="b" style="left:1873px;top:1028px;width:19px;height:19px;background:#fff;border:1px solid #ababab;"></div>
<svg style="left:1880px;top:1033px" width="6" height="10" viewBox="0 0 6 10"><path d="M0.4 0.2V9.4L5.6 4.8z" fill="#666"/></svg>
<div class="b" style="left:0px;top:1053px;width:1920px;height:25px;background:#f3f3f3;"></div>
<div class="b" style="left:0px;top:1078px;width:1920px;height:2px;background:#3b3b3b;"></div>
<svg style="left:10px;top:1057px" width="17" height="17" viewBox="10 1057 17 17"><rect x="12.8" y="1060" width="12.6" height="12.4" fill="#fff" stroke="#5e5e5e" stroke-width="1.3"/><rect x="19" y="1059.4" width="7" height="3.2" fill="#5e5e5e"/><circle cx="14.4" cy="1061.4" r="3.5" fill="#666"/><path d="M14.6 1065h2.2M18 1065h2.2M21.4 1065h2.2M14.6 1067.6h2.2M18 1067.6h2.2M21.4 1067.6h2.2M14.6 1070.2h2.2M18 1070.2h2.2M21.4 1070.2h2.2" stroke="#5e5e5e" stroke-width="1.1"/></svg>
<div class="b" style="left:1555px;top:1053px;width:50px;height:25px;background:#c6c6c6;"></div>
<svg style="left:1572px;top:1058px" width="17" height="16" viewBox="0 0 17 16"><path d="M0.8 0.8h15v14.4h-15z M5.8 0.8v14.4 M10.8 0.8v14.4 M0.8 5.6h15 M0.8 10.4h15" fill="none" stroke="#6a6a6a" stroke-width="1.3"/></svg>
<svg style="left:1621px;top:1058px" width="17" height="16" viewBox="0 0 17 16"><path d="M0.8 0.8h15.4v14.4H0.8z" fill="none" stroke="#666" stroke-width="1.3"/><path d="M4.6 3.8h7.8v8.4H4.6z M6.2 6.2h4.6 M6.2 8h4.6 M6.2 9.8h4.6" fill="none" stroke="#666" stroke-width="1.1"/></svg>
<svg style="left:1671px;top:1058px" width="17" height="16" viewBox="0 0 17 16"><path d="M0.8 0.8h15.4v14.4H0.8z M0.8 9.3h10 M5.8 0.8V9.3 M10.8 0.8V9.3" fill="none" stroke="#666" stroke-width="1.3"/></svg>
<div class="b" style="left:1712px;top:1065px;width:10px;height:1.400000000000091px;background:#555;"></div>
<div class="b" style="left:1728px;top:1065.4px;width:125px;height:1.0px;background:#a0a0a0;"></div>
<div class="b" style="left:1790px;top:1060px;width:1px;height:12px;background:#a0a0a0;"></div>
<div class="b" style="left:1781.5px;top:1059px;width:5.5px;height:14px;background:#5e5e5e;"></div>
<div class="b" style="left:1859px;top:1065px;width:10px;height:1.400000000000091px;background:#555;"></div>
<div class="b" style="left:1863.3px;top:1060.6px;width:1.400000000000091px;height:10.0px;background:#555;"></div>
<span class="t" style="left:1885.03px;top:1060.03px;font-size:13.2px;color:#444;transform:scaleX(0.9243);">90%</span>
</body></html>
